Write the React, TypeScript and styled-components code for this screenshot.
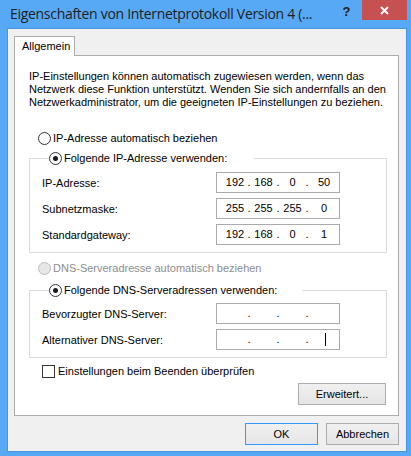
import React from "react";
import styled, { createGlobalStyle, css } from "styled-components";

const Global = createGlobalStyle`
  html, body { margin: 0; padding: 0; }
  body { width: 411px; height: 456px; overflow: hidden; background: #58a9f5; }
  * { box-sizing: border-box; }
`;

const UI_FONT = `"Liberation Sans", Arial, sans-serif`;
const TITLE_FONT = `"Open Sans", "Noto Sans", sans-serif`;

const Window = styled.div`
  width: 411px;
  height: 456px;
  background: #58a9f5;
  display: flex;
  flex-direction: column;
  font-family: ${UI_FONT};
  font-size: 11px;
  color: #000;
`;

const TitleBar = styled.div`
  height: 28px;
  display: flex;
  align-items: flex-start;
  flex-shrink: 0;
`;

const Title = styled.div`
  flex: 1;
  padding: 3px 0 0 10px;
  font-family: ${TITLE_FONT};
  font-size: 14px;
  letter-spacing: -0.3px;
  line-height: 22px;
  color: #1e1e1e;
  white-space: nowrap;
  overflow: hidden;
`;

const HelpButton = styled.div`
  width: 31px;
  height: 20px;
  display: flex;
  align-items: center;
  justify-content: center;
  font-family: ${UI_FONT};
  font-weight: bold;
  font-size: 13px;
  color: #222;
  padding-top: 2px;
`;

const CloseButton = styled.div`
  width: 45px;
  height: 20px;
  margin-right: 4px;
  background: #c75050;
  display: flex;
  align-items: center;
  justify-content: center;
`;

const Client = styled.div`
  flex: 1;
  margin: 0 4px 4px 7px;
  border: 1px solid #4896e0;
  background: #f0f0f0;
  padding: 7px 7px 0 6px;
  display: flex;
  flex-direction: column;
`;

const TabStrip = styled.div`
  display: flex;
  height: 19px;
`;

const Tab = styled.div`
  position: relative;
  z-index: 1;
  width: 61px;
  height: 20px;
  background: #fff;
  border: 1px solid #acacac;
  border-bottom: none;
  padding: 3px 0 0 7px;
  line-height: 13px;
`;

const Panel = styled.div`
  height: 361px;
  background: #fff;
  border: 1px solid #acacac;
  padding: 14px 12px 0 14px;
  display: flex;
  flex-direction: column;
`;

const Intro = styled.p`
  margin: 0;
  line-height: 13px;
`;

const RadioRow = styled.label<{ $indent?: number; $disabled?: boolean }>`
  display: flex;
  align-items: center;
  height: 13px;
  line-height: 13px;
  margin-left: ${(p) => p.$indent ?? 9}px;
  color: ${(p) => (p.$disabled ? "#8d8d8d" : "#000")};
  white-space: nowrap;
`;

const RadioDot = styled.span<{ $checked?: boolean; $disabled?: boolean }>`
  width: 13px;
  height: 13px;
  border-radius: 50%;
  border: 1px solid ${(p) => (p.$disabled ? "#bcbcbc" : "#333")};
  background: ${(p) => (p.$disabled ? "#e6e6e6" : "#fff")};
  margin-right: 2px;
  display: flex;
  align-items: center;
  justify-content: center;
  flex-shrink: 0;
  ${(p) =>
    p.$checked &&
    css`
      &::after {
        content: "";
        width: 5px;
        height: 5px;
        border-radius: 50%;
        background: #1a1a1a;
      }
    `}
`;

const Group = styled.fieldset<{ $top: number }>`
  margin: ${(p) => p.$top}px 0 0 0;
  padding: 0 0 7px 12px;
  width: 358px;
  border: 1px solid #dcdcdc;
  min-width: 0;
`;

const GroupLegend = styled.legend<{ $width: number }>`
  width: ${(p) => p.$width}px;
  padding: 0;
  margin-left: 7px;
  height: 13px;
`;

const Rows = styled.div<{ $top: number }>`
  display: flex;
  flex-direction: column;
  gap: 5px;
  padding-top: ${(p) => p.$top}px;
`;

const FieldRow = styled.div`
  display: grid;
  grid-template-columns: 174px 124px;
  align-items: center;
  height: 21px;
`;

const IpBox = styled.div`
  height: 21px;
  border: 1px solid #ababab;
  background: #fff;
  display: grid;
  grid-template-columns: 24px 4px 25px 4px 25px 4px 1fr;
  align-items: center;
  padding-left: 6px;
  line-height: 13px;
`;

const Octet = styled.span`
  display: flex;
  justify-content: center;
  align-items: center;
  height: 13px;
`;

const Dot = styled.span`
  text-align: center;
`;

const Caret = styled.span`
  width: 1px;
  height: 13px;
  background: #000;
  margin-left: 3px;
`;

const CheckRow = styled.label`
  display: flex;
  align-items: center;
  height: 13px;
  margin: 7px 0 0 13px;
  line-height: 13px;
`;

const CheckBox = styled.span`
  width: 13px;
  height: 13px;
  border: 1px solid #333;
  background: #fff;
  margin-right: 3px;
`;

const Button = styled.button<{ $default?: boolean }>`
  width: 73px;
  height: 22px;
  padding: 0;
  font-family: ${UI_FONT};
  font-size: 11px;
  color: #000;
  border: 1px solid ${(p) => (p.$default ? "#3399ff" : "#acacac")};
  background: linear-gradient(#f0f0f0, #e5e5e5);
  border-radius: 0;
`;

const AdvancedButton = styled(Button)`
  width: 88px;
  align-self: flex-end;
  margin-top: 5px;
`;

const Footer = styled.div`
  display: flex;
  justify-content: flex-end;
  gap: 8px;
  margin-top: 7px;
`;

type IpProps = { parts?: string[]; caret?: boolean };

function IpField({ parts = ["", "", "", ""], caret }: IpProps) {
  return (
    <IpBox>
      <Octet>{parts[0]}</Octet>
      <Dot>.</Dot>
      <Octet>{parts[1]}</Octet>
      <Dot>.</Dot>
      <Octet>{parts[2]}</Octet>
      <Dot>.</Dot>
      <Octet>
        {parts[3]}
        {caret && <Caret />}
      </Octet>
    </IpBox>
  );
}

export default function App() {
  return (
    <>
      <Global />
      <Window>
        <TitleBar>
          <Title>Eigenschaften von Internetprotokoll Version 4 (...</Title>
          <HelpButton>?</HelpButton>
          <CloseButton>
            <svg width="9" height="9" viewBox="0 0 9 9">
              <path d="M1 1 L8 8 M8 1 L1 8" stroke="#fff" strokeWidth="1.8" />
            </svg>
          </CloseButton>
        </TitleBar>
        <Client>
          <TabStrip>
            <Tab>Allgemein</Tab>
          </TabStrip>
          <Panel>
            <Intro>
              IP-Einstellungen können automatisch zugewiesen werden, wenn das
              <br />
              Netzwerk diese Funktion unterstützt. Wenden Sie sich andernfalls an den
              <br />
              Netzwerkadministrator, um die geeigneten IP-Einstellungen zu beziehen.
            </Intro>
            <RadioRow style={{ marginTop: 23 }}>
              <RadioDot />
              IP-Adresse automatisch beziehen
            </RadioRow>
            <Group $top={7}>
              <GroupLegend $width={205}>
                <RadioRow $indent={0}>
                  <RadioDot $checked />
                  Folgende IP-Adresse verwenden:
                </RadioRow>
              </GroupLegend>
              <Rows $top={7}>
                <FieldRow>
                  <span>IP-Adresse:</span>
                  <IpField parts={["192", "168", "0", "50"]} />
                </FieldRow>
                <FieldRow>
                  <span>Subnetzmaske:</span>
                  <IpField parts={["255", "255", "255", "0"]} />
                </FieldRow>
                <FieldRow>
                  <span>Standardgateway:</span>
                  <IpField parts={["192", "168", "0", "1"]} />
                </FieldRow>
              </Rows>
            </Group>
            <RadioRow $disabled style={{ marginTop: 9 }}>
              <RadioDot $disabled />
              DNS-Serveradresse automatisch beziehen
            </RadioRow>
            <Group $top={9}>
              <GroupLegend $width={253}>
                <RadioRow $indent={0}>
                  <RadioDot $checked />
                  Folgende DNS-Serveradressen verwenden:
                </RadioRow>
              </GroupLegend>
              <Rows $top={6}>
                <FieldRow>
                  <span>Bevorzugter DNS-Server:</span>
                  <IpField />
                </FieldRow>
                <FieldRow>
                  <span>Alternativer DNS-Server:</span>
                  <IpField caret />
                </FieldRow>
              </Rows>
            </Group>
            <CheckRow>
              <CheckBox />
              Einstellungen beim Beenden überprüfen
            </CheckRow>
            <AdvancedButton>Erweitert...</AdvancedButton>
          </Panel>
          <Footer>
            <Button $default>OK</Button>
            <Button>Abbrechen</Button>
          </Footer>
        </Client>
      </Window>
    </>
  );
}
